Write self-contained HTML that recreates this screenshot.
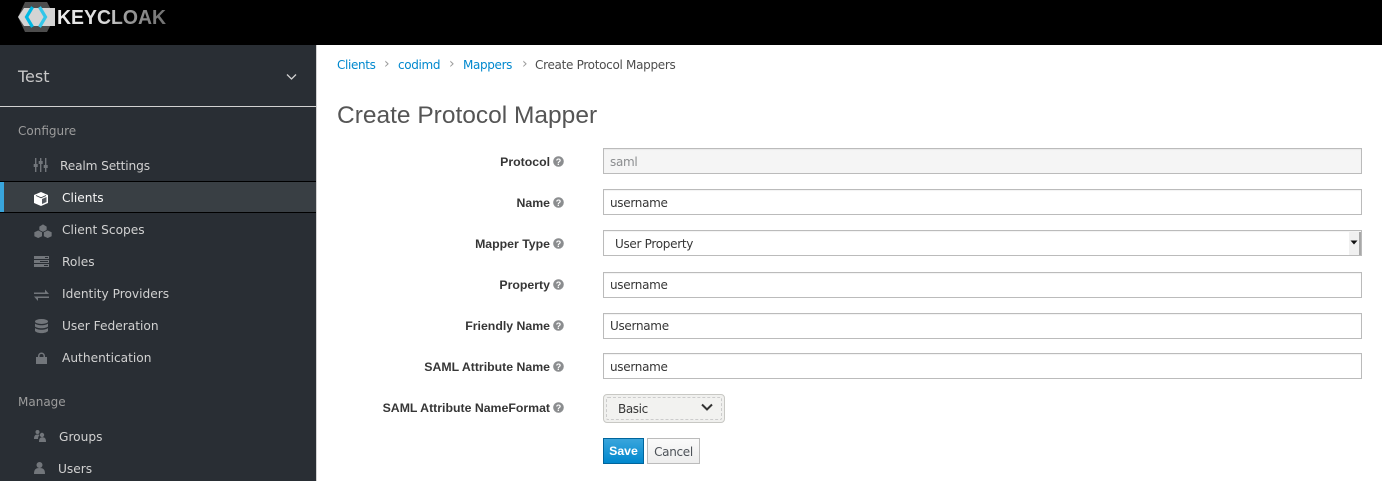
<!DOCTYPE html>
<html><head><meta charset="utf-8"><title>Keycloak</title>
<style>
html,body{margin:0;padding:0;width:1382px;height:481px;overflow:hidden;background:#fff}
body{position:relative;font-family:"DejaVu Sans","Liberation Sans",sans-serif;font-size:12px;color:#363636}
.a{position:absolute;white-space:nowrap;line-height:16px}
#top{position:absolute;left:0;top:0;width:1382px;height:45px;background:#000}
#side{position:absolute;left:0;top:45px;width:316px;height:436px;background:#292e34;border-right:1px solid #d1d1d1}
.nav{color:#d1d1d1;font-size:12.2px}
.sec{color:#9c9c9c;font-size:12px}
.lbl{right:832px;font-family:"Liberation Sans",sans-serif;font-weight:bold;font-size:12.3px;color:#363636;text-align:right}
.inp{position:absolute;left:603px;width:757px;height:24px;border:1px solid #bbb;background:#fff;line-height:24px;text-indent:6px;letter-spacing:-.3px;box-shadow:inset 0 1px 1px rgba(3,3,3,.05)}
.lnk{color:#0088ce;letter-spacing:-.35px}
.sep{color:#9c9c9c;font-size:14px}
</style></head><body>
<div id="top"></div>
<svg style="position:absolute;left:0;top:0" width="180" height="45" viewBox="0 0 180 45">
<defs><linearGradient id="t" x1="0" x2="1" y1="0" y2="0"><stop offset="0" stop-color="#eeeeee"/><stop offset=".45" stop-color="#d8d8d8"/><stop offset=".6" stop-color="#a0a0a0"/><stop offset="1" stop-color="#6f6f6f"/></linearGradient></defs>
<polygon points="25,2 47,2 55,17 47,32 25,32 18,17" fill="#4d4d4d"/>
<polygon points="24,8 55,8 55,26 24,26 18,17" fill="#d4d4d4"/>
<path d="M32.500 7L26.500 17L32.500 27" fill="none" stroke="#00b8e3" stroke-width="3.200"/>
<path d="M39.500 7L45.500 17L39.500 27" fill="none" stroke="#33c6e9" stroke-width="3.200"/>
<text x="57" y="24" font-family="Liberation Sans,sans-serif" font-weight="bold" font-size="20" fill="url(#t)" textLength="109" lengthAdjust="spacingAndGlyphs">KEYCLOAK</text>
</svg>
<div id="side"></div>
<div class="a" style="left:18px;top:67px;font-size:16px;line-height:20px;color:#c8c8c8">Test</div>
<svg style="position:absolute;left:286px;top:73px" width="11" height="8"><path d="M1 1.500L5.500 6L10 1.500" fill="none" stroke="#d1d1d1" stroke-width="1.300"/></svg>
<div style="position:absolute;left:0;top:106px;width:316px;height:1px;background:#d1d1d1"></div>
<div class="a sec" style="left:18px;top:123px">Configure</div>
<div style="position:absolute;left:0;top:181px;width:316px;height:32px;box-sizing:border-box;background:#393f44;border-top:1px solid #000;border-bottom:1px solid #000"></div>
<div style="position:absolute;left:0;top:182px;width:4px;height:30px;background:#39a5dc"></div>
<svg style="position:absolute;left:0;top:0" width="60" height="481" viewBox="0 0 60 481">
<g fill="#72767b">
<!-- sliders -->
<rect x="35" y="158" width="1.400" height="14"/><rect x="40" y="158" width="1.400" height="14"/><rect x="45" y="158" width="1.400" height="14"/>
<rect x="33.700" y="164" width="4" height="3"/><rect x="38.700" y="161" width="4" height="3"/><rect x="43.700" y="165" width="4" height="3"/>
<!-- scopes -->
<path stroke="#292e34" stroke-width=".7" d="M39 226.500l4-2.500 4 2.500v4l-4 2-4-2z"/><path stroke="#292e34" stroke-width=".7" d="M34 232l4.200-2 4.200 2v4.500l-4.200 2-4.200-2z"/><path stroke="#292e34" stroke-width=".7" d="M43.500 232l4.200-2 4.300 2v4.500l-4.300 2-4.200-2z"/>
<!-- roles -->
<path fill-rule="evenodd" d="M34 256h15v3h-15zM45 257h3v1h-3zM34 260h15v3h-15zM40 261h8v1h-8zM34 264h15v3h-15zM44 265h4v1h-4z"/>
<!-- providers -->
<path d="M34 292.500h11v-3l4 4.500h-15zM49 296.500h-15l4 4.500v-3h11z"/>
<!-- database -->
<ellipse cx="41.500" cy="321.500" rx="6.500" ry="2.500"/><path d="M35 323.500c2 2.300 11 2.300 13 0v3c-2 2.300-11 2.300-13 0zM35 328c2 2.300 11 2.300 13 0v3c-2 2.800-11 2.800-13 0z"/>
<!-- lock -->
<path fill-rule="evenodd" d="M38 357v-1a3.500 3.500 0 0 1 7 0v1h2v7h-11v-7zM39.500 357h4v-1a2 2 0 0 0-4 0z"/>
<!-- groups -->
<circle cx="37.500" cy="432" r="2"/><path d="M34 439c0-3 1-4.500 3.500-4.500 1 0 1.500.2 2 .5-1 1-1.500 2.500-1.500 4z"/><circle cx="42" cy="435" r="2.200"/><path d="M39 442c0-3.500 1-4.800 3.500-4.800s3.500 1.300 3.500 4.800z"/>
<!-- users -->
<circle cx="39.500" cy="465" r="3"/><path d="M34 474c0-4.500 1.500-6 5.500-6s5.500 1.500 5.500 6z"/>
</g>
<path d="M41 192l7 3v8l-7 3-7-3v-8z" fill="#fff"/>
<path d="M36 195.500l5 2.300 5-2.300" fill="none" stroke="#393f44" stroke-width=".8"/>
<path d="M42 199v5l4.500-2v-5z" fill="#555a60"/>
</svg>
<div class="a nav" style="left:60px;top:158px;letter-spacing:-.15px">Realm Settings</div>
<div class="a nav" style="left:62px;top:190px;color:#f5f5f5">Clients</div>
<div class="a nav" style="left:62px;top:222px">Client Scopes</div>
<div class="a nav" style="left:62px;top:254px">Roles</div>
<div class="a nav" style="left:62px;top:286px">Identity Providers</div>
<div class="a nav" style="left:62px;top:318px">User Federation</div>
<div class="a nav" style="left:62px;top:350px">Authentication</div>
<div class="a sec" style="left:18px;top:394px">Manage</div>
<div class="a nav" style="left:59px;top:429px">Groups</div>
<div class="a nav" style="left:58px;top:461px">Users</div>

<div class="a lnk" style="left:337px;top:57px">Clients</div><div class="a sep" style="left:384px;top:56px">›</div>
<div class="a lnk" style="left:398px;top:57px">codimd</div><div class="a sep" style="left:449px;top:56px">›</div>
<div class="a lnk" style="left:463px;top:57px">Mappers</div><div class="a sep" style="left:522px;top:56px">›</div>
<div class="a" style="left:535px;top:57px;letter-spacing:-.3px;color:#4d4d4d">Create Protocol Mappers</div>
<div class="a" style="left:337px;top:101px;font-family:'Liberation Sans',sans-serif;font-size:24.500px;line-height:30px;color:#555">Create Protocol Mapper</div>

<div class="a lbl" style="top:154px">Protocol</div>
<div class="a lbl" style="top:195px">Name</div>
<div class="a lbl" style="top:236px">Mapper Type</div>
<div class="a lbl" style="top:277px">Property</div>
<div class="a lbl" style="top:318px">Friendly Name</div>
<div class="a lbl" style="top:359px">SAML Attribute Name</div>
<div class="a lbl" style="top:400px">SAML Attribute NameFormat</div>
<svg style="position:absolute;left:553px;top:155px" width="12" height="260" viewBox="0 0 12 260">
<g font-family="Liberation Sans,sans-serif" font-size="9" font-weight="bold" text-anchor="middle">
<g fill="#8b8d8f"><circle cx="5.500" cy="6.500" r="5.300"/><circle cx="5.500" cy="47.500" r="5.300"/><circle cx="5.500" cy="88.500" r="5.300"/><circle cx="5.500" cy="129.500" r="5.300"/><circle cx="5.500" cy="170.500" r="5.300"/><circle cx="5.500" cy="211.500" r="5.300"/><circle cx="5.500" cy="252.500" r="5.300"/></g>
<g fill="#fff"><text x="5.500" y="9.800">?</text><text x="5.500" y="50.800">?</text><text x="5.500" y="91.800">?</text><text x="5.500" y="132.800">?</text><text x="5.500" y="173.800">?</text><text x="5.500" y="214.800">?</text><text x="5.500" y="255.800">?</text></g>
</g></svg>

<div class="inp" style="top:148px;line-height:26px;background:#f5f5f5;color:#8b8d8f">saml</div>
<div class="inp" style="top:189px;line-height:26px">username</div>
<div class="inp" style="top:230px;line-height:26px;text-indent:11px">User Property</div>
<div style="position:absolute;left:1349px;top:232px;width:12px;height:23px;background:#f0f0f0;border-right:2px solid #a8a8a8;box-sizing:border-box"></div>
<svg style="position:absolute;left:1350px;top:240px" width="8" height="5"><path d="M0.500 0.500h7L4 4.500z" fill="#111"/></svg>
<div class="inp" style="top:272px">username</div>
<div class="inp" style="top:313px">Username</div>
<div class="inp" style="top:353px;line-height:26px">username</div>

<div style="position:absolute;left:603px;top:394px;width:122px;height:29px;box-sizing:border-box;border:1px solid #c8c8c4;border-radius:4px;background:#f0f0ee"></div>
<div style="position:absolute;left:606px;top:397px;width:116px;height:23px;box-sizing:border-box;border:1px dashed #ccc;border-radius:2px;background:#f2f2f0"></div>
<div class="a" style="left:618px;top:401px;letter-spacing:-.4px">Basic</div>
<svg style="position:absolute;left:701px;top:403px" width="12" height="9"><path d="M1 1.500L6 6.500L11 1.500" fill="none" stroke="#333" stroke-width="2"/></svg>

<div style="position:absolute;left:603px;top:438px;width:41px;height:26px;box-sizing:border-box;border:1px solid #00659c;background:linear-gradient(#39a5dc,#0088ce);color:#fff;font-family:'Liberation Sans',sans-serif;font-weight:bold;font-size:12.300px;line-height:25px;text-align:center">Save</div>
<div style="position:absolute;left:647px;top:438px;width:53px;height:26px;box-sizing:border-box;border:1px solid #bbb;background:linear-gradient(#fafafa,#ededed);color:#4d5258;font-size:12px;letter-spacing:-.3px;line-height:26px;text-align:center">Cancel</div>
</body></html>
